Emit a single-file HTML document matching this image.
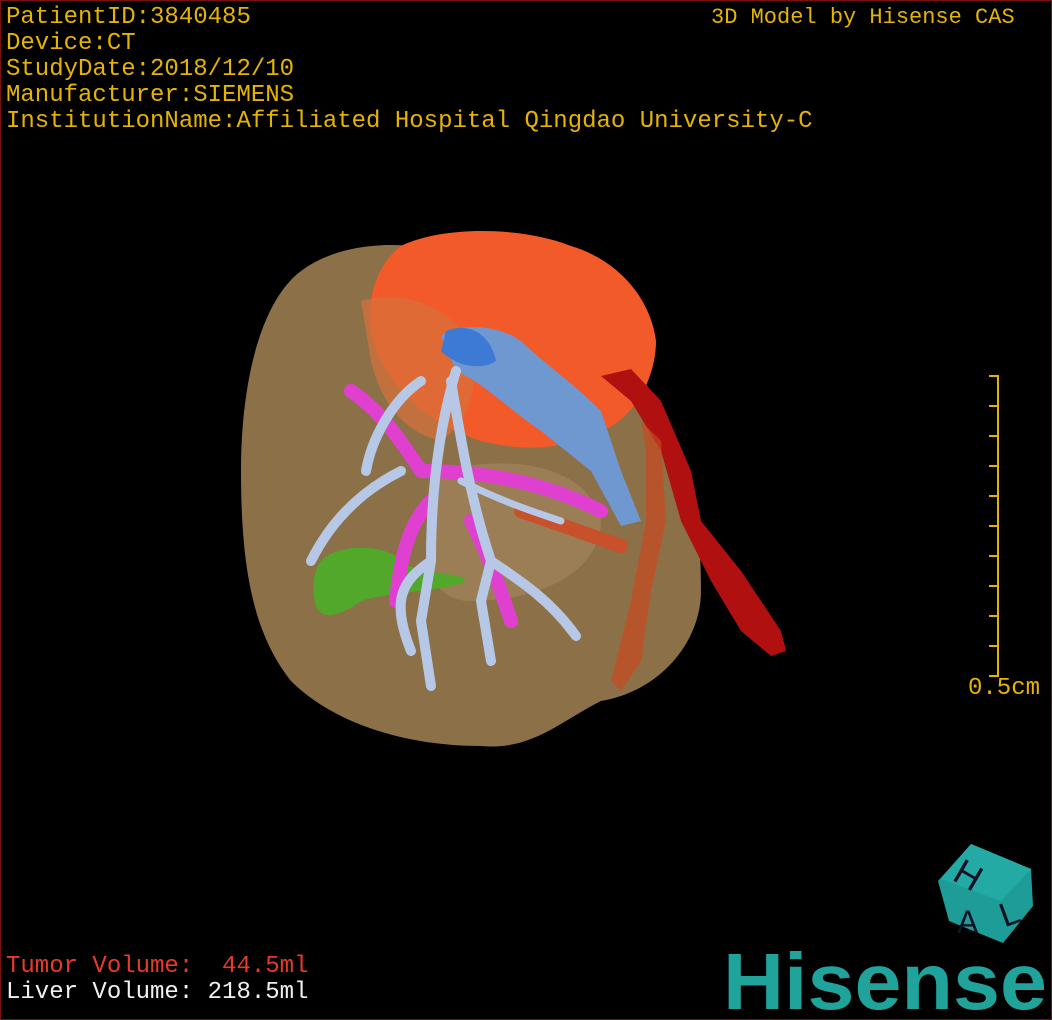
<!DOCTYPE html>
<html><head><meta charset="utf-8"><style>
html,body{margin:0;padding:0;background:#000;}
#w{position:relative;width:1050px;height:1018px;border:1px solid #7a1010;overflow:hidden;background:#000;}
.t{position:absolute;font-family:"Liberation Mono",monospace;font-size:24px;line-height:26px;color:#e6b400;white-space:pre;}
</style></head><body><div id="w">
<svg width="1050" height="1018" style="position:absolute;left:0;top:0">
<!-- liver -->
<path d="M300 270 C340 240 400 240 440 250 C520 260 600 320 650 390 C690 450 700 520 700 590 C700 640 660 690 600 700 C560 720 530 750 480 745 C400 745 330 720 290 680 C250 630 240 560 240 470 C240 380 260 300 300 270Z" fill="#8c7048"/>
<path d="M440 470 C520 450 590 470 600 520 C600 570 540 600 470 600 C430 600 410 560 440 470Z" fill="#a58760" opacity="0.6"/>
<!-- tumor -->
<path d="M400 245 C440 225 520 225 570 245 C620 260 650 300 655 340 C655 380 630 420 600 430 C560 450 520 450 480 440 C420 420 380 380 370 330 C365 290 380 260 400 245Z" fill="#f25a2a"/>
<path d="M360 300 C400 290 440 300 470 340 C480 380 470 420 440 440 C400 430 380 400 370 360Z" fill="#d8703a" opacity="0.7"/>
<!-- red artery -->
<path d="M600 375 L630 368 L660 400 L690 470 L700 520 L740 570 L780 630 L785 650 L770 655 L740 630 L710 580 L680 520 L660 450 L630 400Z" fill="#b01010"/>
<path d="M640 420 L660 440 L665 520 L650 590 L640 660 L620 690 L610 680 L630 600 L645 520 L645 450Z" fill="#c84a20" opacity="0.7"/>
<!-- green -->
<path d="M320 560 C340 540 390 545 400 560 C420 575 460 570 465 580 C450 590 390 590 360 600 C340 615 320 620 315 605 C310 590 312 570 320 560Z" fill="#52a82a"/>
<!-- pink -->
<g stroke="#e040d0" stroke-width="14" fill="none" stroke-linecap="round">
<path d="M420 470 C480 470 540 480 600 510"/>
<path d="M430 500 C410 520 400 550 395 600"/>
<path d="M470 520 C490 560 500 590 510 620"/>
<path d="M350 390 C380 410 400 440 420 470"/>
<path d="M520 510 L620 545" stroke="#c8502a"/>
</g>
<!-- blue veins -->
<path d="M440 335 C460 320 500 325 520 340 C540 360 570 380 600 410 L620 470 L640 520 L620 525 L590 470 L540 430 C510 410 480 380 455 370 Z" fill="#6f97d0"/>
<path d="M445 330 C470 320 490 335 495 360 C480 370 455 365 440 350Z" fill="#3d7ad6"/>
<g stroke="#b6c8e6" stroke-width="10" fill="none" stroke-linecap="round">
<path d="M455 370 C440 420 430 480 430 560 L420 620 L430 685"/>
<path d="M450 380 C460 440 470 500 490 560 L480 600 L490 660"/>
<path d="M490 560 C520 580 550 600 575 635"/>
<path d="M420 380 C390 400 370 440 365 470"/>
<path d="M430 560 C400 580 390 600 410 650"/>
<path d="M400 470 C360 490 330 520 310 560"/>
<path d="M460 480 C500 500 530 510 560 520" stroke-width="7"/>
</g>
<!-- scale bar -->
<g stroke="#e6b400" stroke-width="2">
<line x1="997" y1="374" x2="997" y2="676"/>
<line x1="988" y1="375" x2="998" y2="375"/><line x1="988" y1="405" x2="998" y2="405"/><line x1="988" y1="435" x2="998" y2="435"/><line x1="988" y1="465" x2="998" y2="465"/><line x1="988" y1="495" x2="998" y2="495"/><line x1="988" y1="525" x2="998" y2="525"/><line x1="988" y1="555" x2="998" y2="555"/><line x1="988" y1="585" x2="998" y2="585"/><line x1="988" y1="615" x2="998" y2="615"/><line x1="988" y1="645" x2="998" y2="645"/><line x1="988" y1="675" x2="998" y2="675"/>
</g>
<!-- cube -->
<polygon points="970,843 1030,868 1032,905 1002,942 948,920 937,880" fill="#1e9c98"/>
<polygon points="970,843 1030,868 1000,900 940,878" fill="#23aaa5"/>
<text x="955" y="885" font-family="Liberation Sans,sans-serif" font-size="36" fill="#112" transform="rotate(30 965 872)">H</text>
<text x="956" y="932" font-family="Liberation Sans,sans-serif" font-size="32" fill="#112">A</text>
<text x="998" y="925" font-family="Liberation Sans,sans-serif" font-size="34" fill="#112" transform="rotate(-20 1005 910)">L</text>
<text x="722" y="1008" font-family="Liberation Sans,sans-serif" font-weight="bold" font-size="80" fill="#1fa39a" textLength="324" lengthAdjust="spacingAndGlyphs">Hisense</text>
</svg>
<div class="t" style="left:5px;top:4px">PatientID:3840485
Device:CT
StudyDate:2018/12/10
Manufacturer:SIEMENS
InstitutionName:Affiliated Hospital Qingdao University-C</div>
<div class="t" style="left:710px;top:4px;font-size:22px">3D Model by Hisense CAS</div>
<div class="t" style="left:967px;top:675px">0.5cm</div>
<div class="t" style="left:5px;top:953px;color:#e83a2a">Tumor Volume:  44.5ml</div>
<div class="t" style="left:5px;top:979px;color:#f0f0f0">Liver Volume: 218.5ml</div>
</div></body></html>
